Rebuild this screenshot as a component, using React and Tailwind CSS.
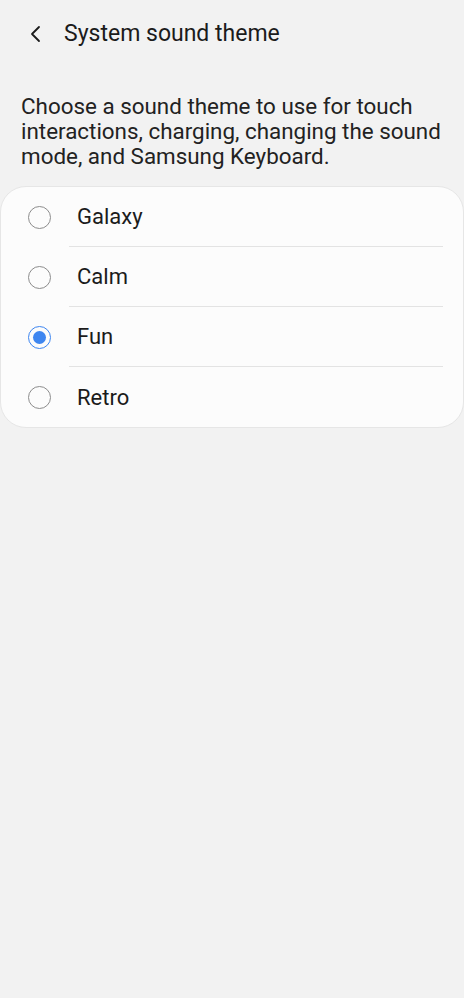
import React, { useState } from 'react';

const themes = ['Galaxy', 'Calm', 'Fun', 'Retro'];

const Radio = ({ checked }) => (
  <div
    className={
      'w-[23px] h-[23px] rounded-full flex items-center justify-center ' +
      (checked ? 'border-[1.5px] border-[#3e86f0]' : 'border-[1.5px] border-[#8c8c8c]')
    }
  >
    {checked && <div className="w-[13px] h-[13px] rounded-full bg-[#3e86f0]" />}
  </div>
);

export default function App() {
  const [selected, setSelected] = useState('Fun');

  return (
    <div
      className="min-h-[998px] w-full bg-[#f2f2f2] text-[#1b1b1b]"
      style={{ fontFamily: 'Roboto, "Noto Sans", sans-serif' }}
    >
      {/* header */}
      <div className="flex items-center h-[67px] pl-[27px]">
        <svg width="18" height="18" viewBox="0 0 18 18" className="mr-[19px]">
          <path d="M12 2 L5 9 L12 16" fill="none" stroke="#1b1b1b" strokeWidth="1.8" strokeLinecap="round" strokeLinejoin="round" />
        </svg>
        <h1 className="text-[23px] leading-none">System sound theme</h1>
      </div>

      <p className="px-[21px] pt-[27px] text-[22.4px] leading-[25px] text-[#222]">
        Choose a sound theme to use for touch interactions, charging, changing the sound mode, and Samsung Keyboard.
      </p>

      <div className="mt-[17px] bg-[#fcfcfc] rounded-[26px] border border-[#e6e6e6] overflow-hidden">
        {themes.map((name, i) => (
          <div
            key={name}
            onClick={() => setSelected(name)}
            className="flex items-center h-[60px] cursor-pointer"
          >
            <div className="w-[76px] flex justify-center">
              <Radio checked={selected === name} />
            </div>
            <div
              className={
                'flex-1 h-full flex items-center mr-[20px] -ml-[8px] pl-[8px] ' +
                (i < themes.length - 1 ? 'border-b border-[#e3e3e3]' : '')
              }
            >
              <span className="text-[22px] text-[#1b1b1b]">{name}</span>
            </div>
          </div>
        ))}
      </div>
    </div>
  );
}
